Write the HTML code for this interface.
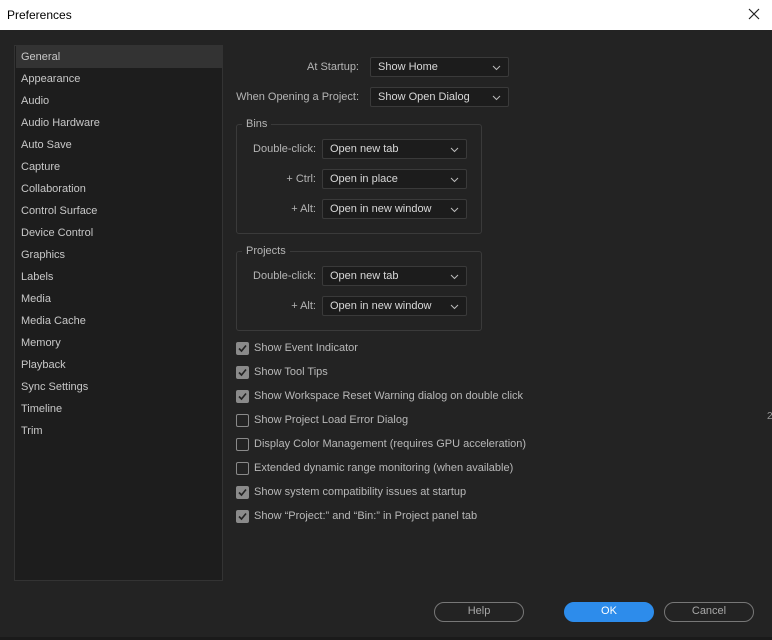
<!DOCTYPE html>
<html><head><style>
*{margin:0;padding:0;box-sizing:border-box}
body{width:772px;height:640px;background:#232323;font-family:"Liberation Sans",sans-serif;font-size:11px;color:#c2c2c2;position:relative;overflow:hidden}
.t{position:absolute;white-space:nowrap}
#title{position:absolute;left:0;top:0;width:772px;height:30px;background:#fff;color:#000;font-size:12px}
#side{position:absolute;left:14px;top:45px;width:209px;height:536px;background:#1d1d1d;border:1px solid #333}
.it{position:absolute;left:1px;width:206px;height:22px;line-height:22px;padding-left:5px;color:#c8c8c8}
.sel{position:absolute;height:20px;background:#1c1c1c;border:1px solid #3a3a3a;border-radius:2px;color:#d8d8d8;line-height:18px;padding-left:7px;white-space:nowrap}
.sel svg{position:absolute;right:7px;top:7px}
.grp{position:absolute;border:1px solid #3a3a3a;border-radius:3px}
.lg{position:absolute;background:#232323;padding:0 4px;color:#b5b5b5}
.lab{position:absolute;text-align:right;color:#b5b5b5;line-height:20px;white-space:nowrap}
.cb{position:absolute;left:236px;width:13px;height:13px;border-radius:2px}
.on{background:#8a8a8a}
.off{border:1.5px solid #8a8a8a}
.cl{position:absolute;left:254px;color:#b8b8b8;line-height:13px;white-space:nowrap}
.btn{position:absolute;top:602px;width:90px;height:20px;border:1.5px solid #777;border-radius:10px;text-align:center;line-height:17px;color:#a8a8a8}
</style></head><body>
<div id="title"><span class="t" style="left:7px;top:8px">Preferences</span>
<svg style="position:absolute;left:748px;top:8px" width="12" height="12"><path d="M1 1L11 11M11 1L1 11" stroke="#222" stroke-width="1.2"/></svg></div>
<div id="side">
<div class="it" style="top:0;background:#333">General</div>
<div class="it" style="top:22px">Appearance</div>
<div class="it" style="top:44px">Audio</div>
<div class="it" style="top:66px">Audio Hardware</div>
<div class="it" style="top:88px">Auto Save</div>
<div class="it" style="top:110px">Capture</div>
<div class="it" style="top:132px">Collaboration</div>
<div class="it" style="top:154px">Control Surface</div>
<div class="it" style="top:176px">Device Control</div>
<div class="it" style="top:198px">Graphics</div>
<div class="it" style="top:220px">Labels</div>
<div class="it" style="top:242px">Media</div>
<div class="it" style="top:264px">Media Cache</div>
<div class="it" style="top:286px">Memory</div>
<div class="it" style="top:308px">Playback</div>
<div class="it" style="top:330px">Sync Settings</div>
<div class="it" style="top:352px">Timeline</div>
<div class="it" style="top:374px">Trim</div>
</div>
<div class="lab" style="left:200px;width:159px;top:57px">At Startup:</div>
<div class="sel" style="left:370px;top:57px;width:139px">Show Home<svg width="9" height="6"><path d="M1 1L4.5 4.5L8 1" stroke="#bbb" fill="none"/></svg></div>
<div class="lab" style="left:200px;width:159px;top:87px">When Opening a Project:</div>
<div class="sel" style="left:370px;top:87px;width:139px">Show Open Dialog<svg width="9" height="6"><path d="M1 1L4.5 4.5L8 1" stroke="#bbb" fill="none"/></svg></div>

<div class="grp" style="left:236px;top:124px;width:246px;height:110px"></div>
<div class="lg" style="left:242px;top:118px">Bins</div>
<div class="lab" style="left:236px;width:80px;top:139px">Double-click:</div>
<div class="sel" style="left:322px;top:139px;width:145px">Open new tab<svg width="9" height="6"><path d="M1 1L4.5 4.5L8 1" stroke="#bbb" fill="none"/></svg></div>
<div class="lab" style="left:236px;width:80px;top:169px">+ Ctrl:</div>
<div class="sel" style="left:322px;top:169px;width:145px">Open in place<svg width="9" height="6"><path d="M1 1L4.5 4.5L8 1" stroke="#bbb" fill="none"/></svg></div>
<div class="lab" style="left:236px;width:80px;top:199px">+ Alt:</div>
<div class="sel" style="left:322px;top:199px;width:145px">Open in new window<svg width="9" height="6"><path d="M1 1L4.5 4.5L8 1" stroke="#bbb" fill="none"/></svg></div>

<div class="grp" style="left:236px;top:251px;width:246px;height:80px"></div>
<div class="lg" style="left:242px;top:245px">Projects</div>
<div class="lab" style="left:236px;width:80px;top:266px">Double-click:</div>
<div class="sel" style="left:322px;top:266px;width:145px">Open new tab<svg width="9" height="6"><path d="M1 1L4.5 4.5L8 1" stroke="#bbb" fill="none"/></svg></div>
<div class="lab" style="left:236px;width:80px;top:296px">+ Alt:</div>
<div class="sel" style="left:322px;top:296px;width:145px">Open in new window<svg width="9" height="6"><path d="M1 1L4.5 4.5L8 1" stroke="#bbb" fill="none"/></svg></div>

<div class="cb on" style="top:342px"><svg width="13" height="13"><path d="M3 6.5L5.5 9L10 3.5" stroke="#222" stroke-width="1.6" fill="none"/></svg></div>
<div class="cl" style="top:342px">Show Event Indicator</div>
<div class="cb on" style="top:366px"><svg width="13" height="13"><path d="M3 6.5L5.5 9L10 3.5" stroke="#222" stroke-width="1.6" fill="none"/></svg></div>
<div class="cl" style="top:366px">Show Tool Tips</div>
<div class="cb on" style="top:390px"><svg width="13" height="13"><path d="M3 6.5L5.5 9L10 3.5" stroke="#222" stroke-width="1.6" fill="none"/></svg></div>
<div class="cl" style="top:390px">Show Workspace Reset Warning dialog on double click</div>
<div class="cb off" style="top:414px"></div>
<div class="cl" style="top:414px">Show Project Load Error Dialog</div>
<div class="cb off" style="top:438px"></div>
<div class="cl" style="top:438px">Display Color Management (requires GPU acceleration)</div>
<div class="cb off" style="top:462px"></div>
<div class="cl" style="top:462px">Extended dynamic range monitoring (when available)</div>
<div class="cb on" style="top:486px"><svg width="13" height="13"><path d="M3 6.5L5.5 9L10 3.5" stroke="#222" stroke-width="1.6" fill="none"/></svg></div>
<div class="cl" style="top:486px">Show system compatibility issues at startup</div>
<div class="cb on" style="top:510px"><svg width="13" height="13"><path d="M3 6.5L5.5 9L10 3.5" stroke="#222" stroke-width="1.6" fill="none"/></svg></div>
<div class="cl" style="top:510px">Show “Project:” and “Bin:” in Project panel tab</div>
<div class="t" style="left:767px;top:411px;font-size:10px;color:#999">2</div>

<div class="btn" style="left:434px">Help</div>
<div class="btn" style="left:564px;background:#2d8ceb;border-color:#2d8ceb;color:#fff">OK</div>
<div class="btn" style="left:664px">Cancel</div>
<div style="position:absolute;left:0;top:637px;width:772px;height:3px;background:#1a1a1a"></div>
</body></html>
